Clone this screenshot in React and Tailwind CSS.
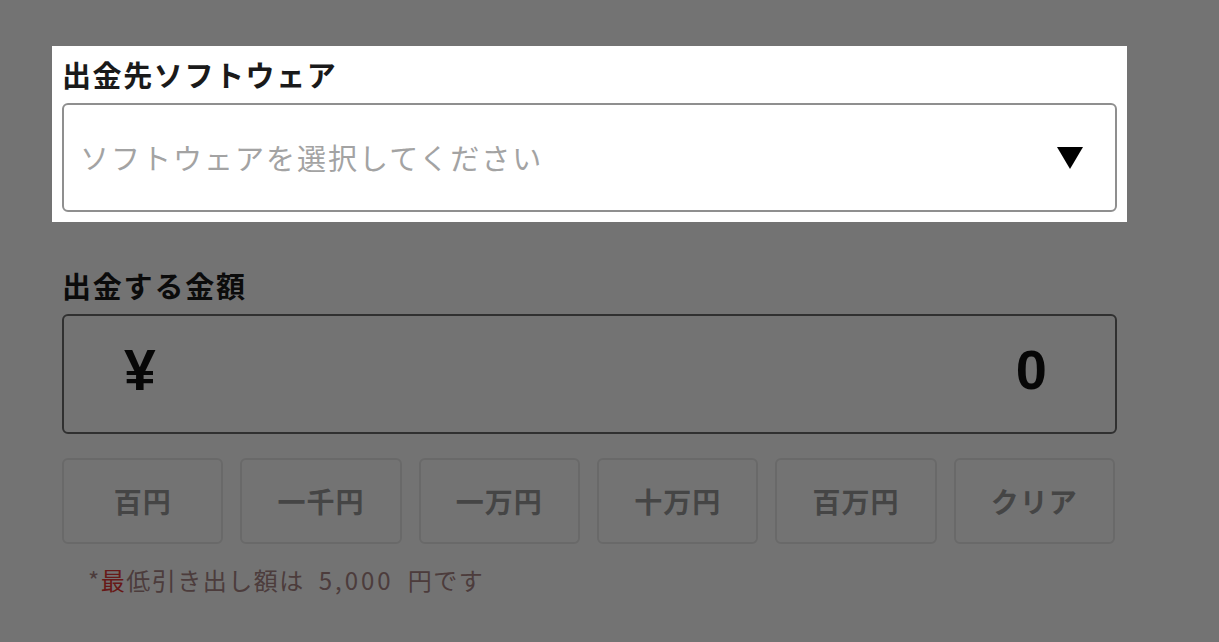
import React from 'react';

const font = { fontFamily: '"Noto Sans CJK JP", "Noto Sans", sans-serif' };

const amounts = ['百円', '一千円', '一万円', '十万円', '百万円', 'クリア'];

export default function App() {
  return (
    <div className="relative w-[1219px] h-[642px] overflow-hidden bg-white" style={font}>
      <div className="pl-[52px] pt-[46px]">
        {/* Highlighted section (above the overlay) */}
        <section className="relative z-20 w-[1075px] bg-white px-[10px] pt-[8px] pb-[10px]">
          <label className="block h-[40px] leading-[40px] text-[29px] font-bold text-[#1a1a1a] tracking-[1.6px]">
            出金先ソフトウェア
          </label>
          <div className="mt-[9px] h-[109px] flex items-center justify-between border-2 border-[#8f8f8f] rounded-md pl-[16px] pr-[32px]">
            <span className="text-[29px] text-[#a3a3a3] tracking-[2px]">ソフトウェアを選択してください</span>
            <svg width="26" height="22" viewBox="0 0 26 22">
              <path d="M0 0 H26 L13 22 Z" fill="#000" />
            </svg>
          </div>
        </section>

        {/* Amount section */}
        <section className="w-[1075px] px-[10px] pt-[43px]">
          <label className="block h-[40px] leading-[40px] text-[29px] font-bold text-[#1a1a1a] tracking-[1.8px]">
            出金する金額
          </label>
          <div
            className="mt-[9px] h-[120px] flex items-center justify-between border-2 border-[#6b6b6b] rounded-md pl-[60px] pr-[68px] pb-[8px]"
            style={{ fontFamily: '"Liberation Sans", Arial, sans-serif' }}
          >
            <span className="text-[57px] font-bold text-[#111] leading-none">¥</span>
            <span className="text-[56px] font-bold text-[#111] leading-none">0</span>
          </div>

          <div className="mt-[24px] grid grid-cols-6 gap-[17px] w-[1053px]">
            {amounts.map((a) => (
              <button
                key={a}
                className="h-[86px] border-2 border-[#e8e8e8] rounded-md text-[28px] font-semibold text-[#9a9a9a] tracking-[1px]"
              >
                {a}
              </button>
            ))}
          </div>

          <p className="mt-[21px] pl-[26px] h-[30px] leading-[30px] text-[24px] text-[#a88585] tracking-[1.5px]">
            *<span className="text-[#e53935]">最</span>低引き出し額は<span className="mx-[14px] tracking-[3px]">5,000</span>円です
          </p>
        </section>
      </div>

      {/* Dimming overlay */}
      <div className="absolute inset-0 z-10 bg-black/55" />
    </div>
  );
}
